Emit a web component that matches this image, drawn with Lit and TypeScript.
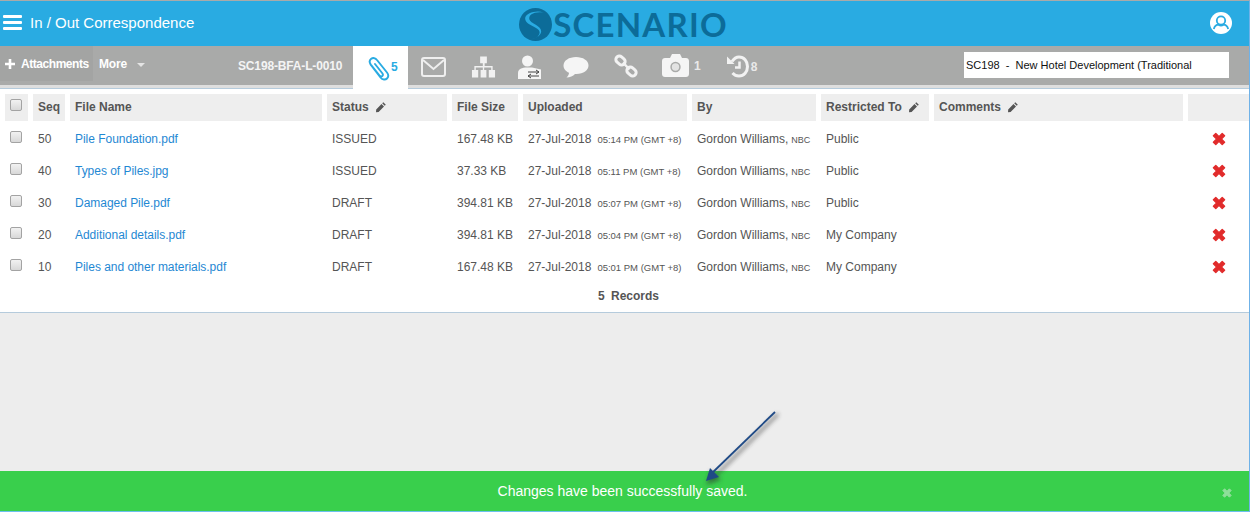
import { LitElement, html, css } from "lit";
import { customElement } from "lit/decorators.js";

const rows = [
  ["50", "Pile Foundation.pdf", "ISSUED", "167.48 KB", "05:14 PM", "Public"],
  ["40", "Types of Piles.jpg", "ISSUED", "37.33 KB", "05:11 PM", "Public"],
  ["30", "Damaged Pile.pdf", "DRAFT", "394.81 KB", "05:07 PM", "Public"],
  ["20", "Additional details.pdf", "DRAFT", "394.81 KB", "05:04 PM", "My Company"],
  ["10", "Piles and other materials.pdf", "DRAFT", "167.48 KB", "05:01 PM", "My Company"],
];

const pencil = html`<svg class="pencil" viewBox="0 0 12 12"><path d="M8.300 1.200 10.800 3.700 9.700 4.800 7.200 2.300ZM6.500 3 9 5.500 3.600 10.900 1 11.200 1.200 8.400Z" fill="#555"/></svg>`;
const cross = html`<svg class="cross" viewBox="0 0 12 12"><path d="M1.800 3.600 3.600 1.800 6 4.200 8.400 1.800 10.200 3.600 7.800 6 10.200 8.400 8.400 10.200 6 7.800 3.600 10.200 1.800 8.400 4.200 6Z" fill="currentColor" stroke="currentColor" stroke-width="1" stroke-linejoin="round"/></svg>`;

@customElement("app-root")
export class AppRoot extends LitElement {
  static styles = css`
    :host { display: block; width: 1250px; height: 512px; position: relative; overflow: hidden;
      font-family: "Liberation Sans", Arial, sans-serif; background: #ededed; color: #555; box-sizing: border-box;
      border-top: 1px solid #a9aaa9; border-right: 1px solid #6fb2e8; border-bottom: 1px solid #6cc0ee; }
    * { box-sizing: border-box; }
    .top { height: 45px; background: #29abe2; display: grid; grid-template-columns: 1fr auto 1fr; align-items: center; color: #fff; }
    .left { display: flex; align-items: center; padding-left: 3px; gap: 8px; font-size: 15px; }
    .burger { width: 19px; height: 15px; display: flex; flex-direction: column; justify-content: space-between; margin-top: -2px; }
    .burger i { display: block; height: 3px; background: #fff; border-radius: 1px; }
    .title { margin-top: -2px; }
    .logo { display: flex; align-items: center; gap: 1px; margin-left: -2px; margin-top: 1px; }
    .logo svg { width: 33px; height: 33px; }
    .logo span { font-family: Lato, sans-serif; font-weight: 700; font-size: 33px; letter-spacing: 1.2px; color: #0c6c99; line-height: 33px; margin-top: 1px; }
    .right { display: flex; justify-content: flex-end; padding-right: 17px; margin-top: -1px; }
    .right svg { width: 22px; height: 22px; }
    .bar { height: 39px; background: #a9aaa9; display: flex; color: #fff; font-weight: 700; position: relative; }
    .strip { height: 4px; background: #dedede; border-bottom: 1px solid #b5cbdc; }
    .add { width: 93px; height: 35px; background: #a3a4a3; display: flex; align-items: center; padding-left: 5px; gap: 6px; font-size: 12px; letter-spacing: -0.45px; }
    .add svg { width: 10px; height: 10px; }
    .more { width: 134px; display: flex; align-items: center; gap: 10px; padding-left: 6px; font-size: 12px; letter-spacing: -0.2px; padding-bottom: 3px; }
    .caret { width: 0; height: 0; border-left: 4px solid transparent; border-right: 4px solid transparent; border-top: 4px solid #e4e4e4; margin-top: 1px; }
    .code { width: 126px; padding-left: 11px; display: flex; align-items: center; font-size: 12px; color: #f4f4f4; letter-spacing: -0.15px; }
    .tab { width: 55px; height: 47px; background: #fff; color: #29abe2; display: flex; align-items: flex-start; padding: 10px 0 0 13px; gap: 1px; font-size: 12px; position: relative; z-index: 1; }
    .tab b { margin-top: 4px; }
    .tab svg { width: 24px; height: 26px; }
    .icons { display: flex; align-items: center; padding-top: 3px; }
    .ic { display: flex; align-items: center; font-size: 12px; color: #e9e9e9; }
    .icons svg { display: block; }
    .i-mail { margin-left: 13px; }
    .i-org { margin-left: 25px; }
    .i-user { margin-left: 22px; }
    .i-chat { margin-left: 22px; }
    .i-link { margin-left: 25px; margin-top: -2px; }
    .i-cam { margin-left: 24px; gap: 5px; margin-top: -3px; }
    .i-hist { margin-left: 26px; gap: 2px; margin-top: -1px; }
    .select { margin-left: auto; margin-right: 20px; margin-top: 6px; width: 265px; height: 26px; background: #fff; color: #111; font-weight: 400; font-size: 11px; display: flex; align-items: center; padding-left: 2px; white-space: pre; }
    .panel { background: #fff; height: 224px; border-bottom: 1px solid #b5cbdc; padding-top: 5px; }
    .grid { display: grid; grid-template-columns: 23px 32px 252px 120px 66px 164px 124px 108px 249px 62px; column-gap: 5px; padding-left: 5px; font-size: 12px; }
    .h { height: 27px; margin-bottom: 2px; background: #eee; display: flex; align-items: center; padding: 0 0 1px 5px; font-weight: 700; color: #555; gap: 6px; font-size: 12px; }
    .c { height: 32px; display: flex; align-items: center; padding-left: 5px; color: #555; white-space: nowrap; }
    a { color: #1f88d3; text-decoration: none; letter-spacing: -0.03px; }
    .box { display: block; width: 12px; height: 12px; border: 1px solid #a3a3a3; border-radius: 2px; background: linear-gradient(#f2f2f2, #d8d8d8); margin-top: -5px; }
    .small { font-size: 9.5px; margin-left: 6px; }
    .org { font-size: 9px; margin-left: 3px; margin-top: 1px; }
    .pencil { width: 12px; height: 12px; }
    .cross { width: 16px; height: 16px; color: #e12b2b; margin-top: -1px; }
    .x { justify-content: center; padding: 0; }
    .rec { text-align: center; font-weight: 700; font-size: 12px; color: #555; margin-top: 6px; word-spacing: 3px; line-height: 14px; padding-left: 8px; }
    .gap { height: 158px; }
    .toast { height: 40px; background: #39cf4c; color: #fff; display: flex; align-items: center; justify-content: center; font-size: 14px; position: relative; padding-right: 4px; }
    .close { position: absolute; right: 16px; top: 16px; width: 12px; height: 12px; color: #8fdf9a; }
    .close svg { width: 12px; height: 12px; margin: 0; color: inherit; display: block; }
    .arrow { position: absolute; left: 700px; top: 405px; width: 90px; height: 85px; overflow: visible; }
  `;

  render() {
    return html`
      <div class="top">
        <div class="left"><div class="burger"><i></i><i></i><i></i></div><span class="title">In / Out Correspondence</span></div>
        <div class="logo">
          <svg viewBox="0 0 32 32"><circle cx="16" cy="16" r="16" fill="#0c6c99"/><path d="M24 4.500C15 3 9 6.500 10 11c1 4.500 12 6 11.500 12C21 27 15 31 9 30.500 16 31 20 27 20 23.500 20 18 5 17 6 9.500 7 5 17 1.500 24 4.500Z" fill="#29abe2"/></svg>
          <span>SCENARIO</span>
        </div>
        <div class="right">
          <svg viewBox="0 0 22 22"><circle cx="11" cy="11" r="11" fill="#fff"/><circle cx="11" cy="8.500" r="4.200" fill="none" stroke="#29abe2" stroke-width="1.800"/><path d="M3.800 17c1-3.500 3.500-4.300 4.700-4.300 1.500 1 3.500 1 5 0 1.200 0 3.700.8 4.700 4.300" fill="none" stroke="#29abe2" stroke-width="1.800"/></svg>
        </div>
      </div>
      <div class="bar">
        <div class="add"><svg viewBox="0 0 10 10"><path d="M3.700 0h2.600v3.700H10v2.600H6.300V10H3.700V6.300H0V3.700h3.700Z" fill="#fff"/></svg>Attachments</div>
        <div class="more">More<i class="caret"></i></div>
        <div class="code">SC198-BFA-L-0010</div>
        <div class="tab">
          <svg viewBox="0 0 24 26"><path d="M4.500 8.500 14.500 21.500C16.500 24 19.500 24 21 22.500 22.500 21 22.500 18.500 21 16.500L11 4C9.500 2 7 1.500 5.200 2.800 3.300 4.300 3.300 6.500 4.800 8.500L13.500 19.500C14.300 20.500 15.500 20.700 16.300 20 17.100 19.300 17 18.200 16.300 17.200L9 8" fill="none" stroke="#29abe2" stroke-width="1.900" stroke-linecap="round"/></svg>
          <b>5</b>
        </div>
        <div class="icons">
          <svg class="i-mail" width="25" height="20" viewBox="0 0 25 20"><rect x="1" y="1" width="23" height="18" rx="2" fill="none" stroke="#efefef" stroke-width="2"/><path d="M2 3 12.500 12 23 3" fill="none" stroke="#efefef" stroke-width="2"/></svg>
          <svg class="i-org" width="25" height="22" viewBox="0 0 26 22"><path d="M9.500 0h7v7h-2.300v3h8.300v4h2.500v8h-6.500v-8h2.500v-2.500h-7.300V14H16v8H10v-8h2.300v-2.500H5V14h2.500v8H1v-8h2.500v-4h8.800V7H9.500Z" fill="#f1f1f1"/></svg>
          <svg class="i-user" width="23" height="24" viewBox="0 0 23 24"><circle cx="9.500" cy="6" r="5.500" fill="#f5f5f5"/><path d="M0 24V18C0 14 4 12.500 9 12.500h5l9 2V24Z" fill="#f5f5f5"/><path d="M10 17h11M18 15l3 2-3 2M21 21H10M13 19l-3 2 3 2" fill="none" stroke="#444" stroke-width="1"/></svg>
          <svg class="i-chat" width="26" height="22" viewBox="0 0 26 22"><path d="M13 1C6 1 .5 4.500.5 9.500.5 13 3 15.500 6 16.800 6 18.500 5 20.500 3.500 21.500 7 21.500 10 20 12 18 20 18.500 25.500 14.500 25.500 9.500 25.500 4.500 20 1 13 1Z" fill="#f5f5f5"/></svg>
          <svg class="i-link" width="24" height="24" viewBox="0 0 24 24"><g fill="none" stroke="#f2f2f2" stroke-width="3"><rect x="1.500" y="3" width="10" height="7" rx="3.500" transform="rotate(40 6.500 6.500)"/><rect x="12.500" y="14" width="10" height="7" rx="3.500" transform="rotate(40 17.500 17.500)"/></g><path d="M9 8.500 15.500 15.500" stroke="#f2f2f2" stroke-width="2.500"/></svg>
          <div class="ic i-cam">
            <svg width="27" height="23" viewBox="0 0 27 23"><path d="M3 4h5l2-4h8l2 4h4c1.700 0 3 1.300 3 3v13c0 1.700-1.300 3-3 3H3c-1.700 0-3-1.300-3-3V7c0-1.700 1.300-3 3-3Z" fill="#f5f5f5"/><circle cx="13.500" cy="13" r="5.200" fill="#a9aaa9"/><circle cx="13.500" cy="13" r="3.700" fill="#e3e3e3"/></svg>
            <span>1</span>
          </div>
          <div class="ic i-hist">
            <svg width="22" height="23" viewBox="0 0 22 23"><path d="M5 6.500C7 3.500 9.500 2 12 2 17 2 20.500 6.300 20.500 11.500S17 21 12 21C9.500 21 7.300 20 5.500 18" fill="none" stroke="#f2f2f2" stroke-width="3"/><path d="M0 1.500 7.500 9H0Z" fill="#f2f2f2"/><path d="M12.500 6.500V12.500H8" fill="none" stroke="#f2f2f2" stroke-width="2.500"/></svg>
            <span>8</span>
          </div>
        </div>
        <div class="select">SC198  -  New Hotel Development (Traditional</div>
      </div>
      <div class="strip"></div>
      <div class="panel">
        <div class="grid">
          <div class="h"><i class="box"></i></div>
          <div class="h">Seq</div><div class="h">File Name</div><div class="h">Status ${pencil}</div>
          <div class="h">File Size</div><div class="h">Uploaded</div><div class="h">By</div>
          <div class="h">Restricted To ${pencil}</div><div class="h">Comments ${pencil}</div><div class="h"></div>
          ${rows.map((r) => html`
            <div class="c"><i class="box"></i></div>
            <div class="c">${r[0]}</div>
            <div class="c"><a href="#">${r[1]}</a></div>
            <div class="c">${r[2]}</div>
            <div class="c">${r[3]}</div>
            <div class="c">27-Jul-2018<span class="small">${r[4]} (GMT +8)</span></div>
            <div class="c">Gordon Williams,<span class="org">NBC</span></div>
            <div class="c">${r[5]}</div>
            <div class="c"></div>
            <div class="c x">${cross}</div>
          `)}
        </div>
        <div class="rec">5 Records</div>
      </div>
      <div class="gap"></div>
      <div class="toast"><span>Changes have been successfully saved.</span><div class="close">${cross}</div></div>
      <svg class="arrow" viewBox="0 0 90 85">
        <defs><filter id="s" x="-30%" y="-30%" width="160%" height="160%"><feGaussianBlur stdDeviation="2"/></filter></defs>
        <g filter="url(#s)" opacity=".55"><path d="M78 8 13 72" stroke="#333" stroke-width="3" fill="none"/><path d="M6 79 11 64 21 74Z" fill="#333"/></g>
        <path d="M75 6 10 69" stroke="#1f4a86" stroke-width="1.800" fill="none"/>
        <path d="M6 75 10 62 19 71Z" fill="#1f4a86"/>
      </svg>
    `;
  }
}
